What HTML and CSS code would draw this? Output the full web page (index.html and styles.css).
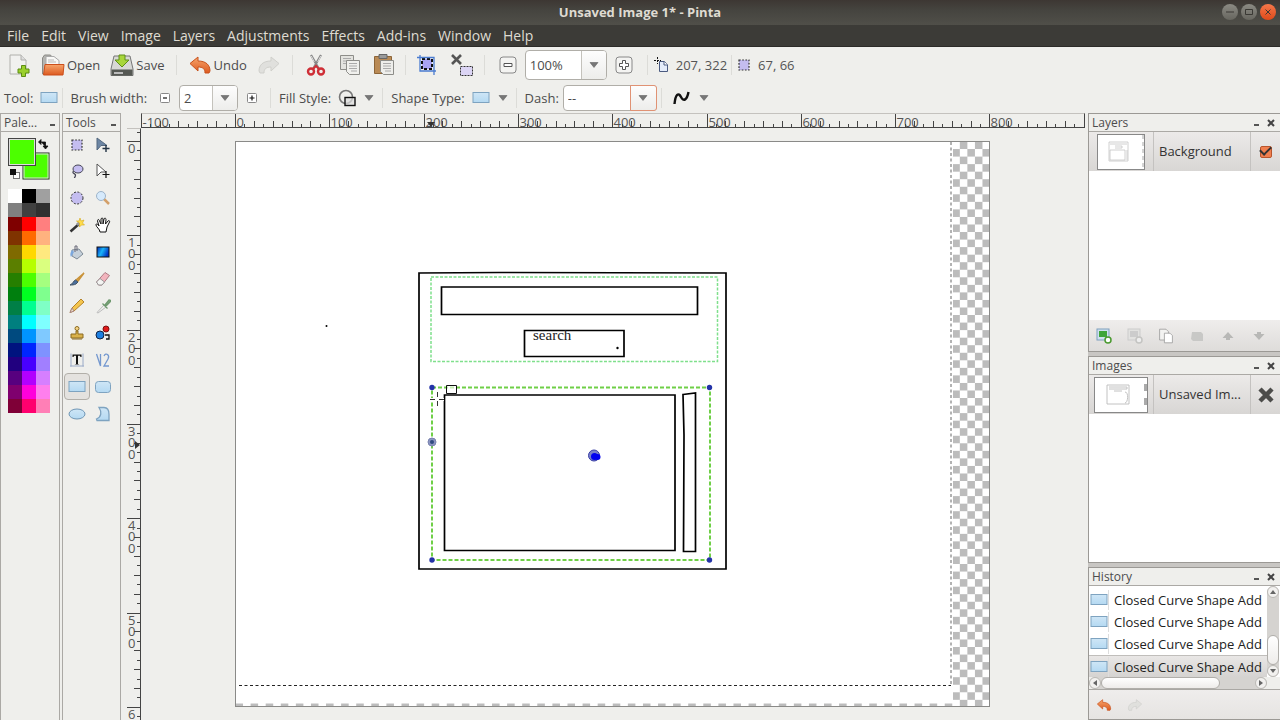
FILE: index.html
```html
<!DOCTYPE html>
<html lang="en">
<head>
<meta charset="utf-8">
<title>Unsaved Image 1* - Pinta</title>
<link rel="stylesheet" href="styles.css">
</head>
<body>
<svg class="defs" aria-hidden="true">
  <defs>
    <linearGradient id="g-blue" x1="0" y1="0" x2="0" y2="1"><stop offset="0" stop-color="#cfe6f6"/><stop offset="1" stop-color="#b4d9f2"/></linearGradient>
    <linearGradient id="g-orange" x1="0" y1="0" x2="0" y2="1"><stop offset="0" stop-color="#f7a56c"/><stop offset="1" stop-color="#dc5a20"/></linearGradient>
    <linearGradient id="g-grad" x1="0" y1="0" x2="1" y2=".4"><stop offset="0" stop-color="#0026b8"/><stop offset=".5" stop-color="#19b4f8"/><stop offset="1" stop-color="#0038c8"/></linearGradient>
    <symbol id="i-rect" viewBox="0 0 18 14"><rect x="1" y="1.500" width="16" height="10" fill="url(#g-blue)" stroke="#7ea3c0"/></symbol>
    <symbol id="i-arrow" viewBox="0 0 10 6"><path d="M1 .5h8L5 5.500z" fill="#777" stroke="#555" stroke-width=".5"/></symbol>
    <symbol id="i-undo" viewBox="0 0 24 24"><path d="M2 10.500 10 4v4c8 0 12 4 12 10l-1 2h-4c0-4-2-6-7-6v4z" fill="url(#g-orange)" stroke="#c8521c"/></symbol>
    <symbol id="i-redo" viewBox="0 0 24 24"><path d="M22 10.500 14 4v4C6 8 2 12 2 18l1 2h4c0-4 2-6 7-6v4z" fill="#e0e0dd" stroke="#cfcfcb"/></symbol>
    <symbol id="i-sel" viewBox="0 0 16 16"><rect x="3" y="3" width="10" height="10" fill="#c4bdf0" stroke="#333" stroke-width="1.200" stroke-dasharray="1.700 1.500"/></symbol>
    <symbol id="i-pages" viewBox="0 0 20 20"><path d="M2 1.500h8l3 3V15H2z" fill="#f3f3f1" stroke="#999"/><path d="M8 6.500h7l3 3v9H8z" fill="#fff" stroke="#999"/></symbol>
  </defs>
</svg>

<header class="titlebar">
  <h1 class="title">Unsaved Image 1* - Pinta</h1>
  <div class="window-buttons">
    <button class="wbtn" aria-label="Minimize"><svg viewBox="0 0 16 16"><path d="M4 8h8" /></svg></button>
    <button class="wbtn" aria-label="Maximize"><svg viewBox="0 0 16 16"><path d="M4.500 5.500h7v5h-7z"/></svg></button>
    <button class="wbtn wclose" aria-label="Close"><svg viewBox="0 0 16 16"><path d="M5.500 5.500l5 5M10.500 5.500l-5 5"/></svg></button>
  </div>
</header>

<nav class="menubar">
  <button>File</button><button>Edit</button><button>View</button><button>Image</button><button>Layers</button><button>Adjustments</button><button>Effects</button><button>Add-ins</button><button>Window</button><button>Help</button>
</nav>

<div class="toolbar main-tools">
  <button class="tb" aria-label="New"><svg class="i24" viewBox="0 0 24 24"><path d="M3 2h11l5 5v14H3z" fill="#f1f1ef" stroke="#b0b0ac"/><path d="M14 2v5h5" fill="#ddd" stroke="#b0b0ac"/><path d="M14.500 12.500h4v3.500H22v4h-3.500v3.500h-4V20H11v-4h3.500z" fill="#9bd02c" stroke="#5c8d14"/></svg></button>
  <button class="tb"><svg class="i24" viewBox="0 0 24 24"><path d="M1.500 5l2-3h6l2 3v16h-10z" fill="#b5b5b1" stroke="#8a8a86"/><path d="M5 3.500h8l5 4v7H5z" fill="#f8f8f6" stroke="#aaa"/><path d="M7 7h6M7 9h8" stroke="#bbb"/><path d="M4 11.500h19l-1 10.500H2.500z" fill="url(#g-orange)" stroke="#cc4f1b"/></svg>Open</button>
  <button class="tb"><svg class="i24" viewBox="0 0 24 24"><path d="M4 3h16l3 13v6.500H1V16z" fill="#d8d8d5" stroke="#777"/><path d="M1.500 16.500h21v6h-21z" fill="#555853"/><path d="M4 20h9" stroke="#bbb" stroke-width="2"/><path d="M9 2h6v5h4l-7 7-7-7h4z" fill="#a8d63a" stroke="#5f8f18"/></svg>Save</button>
  <i class="sep"></i>
  <button class="tb"><svg class="i24"><use href="#i-undo"/></svg>Undo</button>
  <button class="tb" aria-label="Redo" disabled><svg class="i24"><use href="#i-redo"/></svg></button>
  <i class="sep"></i>
  <button class="tb" aria-label="Cut"><svg class="i24" viewBox="0 0 24 24"><path d="M7 2l8 14M17 2L9 16" stroke="#888" stroke-width="2.200" fill="none"/><path d="M7.300 3l3 6M16.700 3l-3 6" stroke="#ddd"/><circle cx="7" cy="18.500" r="3" fill="none" stroke="#cf2f37" stroke-width="2.400"/><circle cx="17" cy="18.500" r="3" fill="none" stroke="#cf2f37" stroke-width="2.400"/><path d="M9 16l3-3 3 3" fill="none" stroke="#cf2f37" stroke-width="2"/></svg></button>
  <button class="tb" aria-label="Copy"><svg class="i24" viewBox="0 0 24 24"><path d="M2.500 2.500h13v14h-13z" fill="#e3e3df" stroke="#8d8d89"/><path d="M5 5.500h8M5 8h6M5 10.500h3" stroke="#aaa"/><path d="M8.500 7.500h13v14h-10l-3-3z" fill="#f0f0ed" stroke="#8d8d89"/><path d="M11 10.500h8M11 13h8M11 15.500h8M13 18h6" stroke="#aaa"/></svg></button>
  <button class="tb" aria-label="Paste"><svg class="i24" viewBox="0 0 24 24"><path d="M2.500 3.500h17v17h-17z" fill="#b98a55" stroke="#8d6538"/><path d="M7 1.500h8v4H7z" fill="#999" stroke="#666"/><path d="M8.500 7.500h13v14h-10l-3-3z" fill="#eeeeeb" stroke="#8d8d89"/><path d="M11 10.500h8M11 13h8M11 15.500h8M13 18h6" stroke="#aaa"/></svg></button>
  <i class="sep tight"></i>
  <button class="tb" aria-label="Crop to Selection"><svg class="i24" viewBox="0 0 24 24"><rect x="7" y="6" width="10" height="10" fill="#a9a3f2" stroke="#111" stroke-width="2" stroke-dasharray="3 2"/><path d="M5 2v16h16M2 4.500h17V22" fill="none" stroke="#4a7bd0" stroke-width="1.300"/></svg></button>
  <button class="tb" aria-label="Deselect"><svg class="i24" viewBox="0 0 24 24"><path d="M3 2l9 9M12 2l-9 9" stroke="#555" stroke-width="2.600"/><rect x="11.500" y="13.500" width="12" height="9" fill="#dcd5f5" stroke="#333" stroke-dasharray="2 1"/></svg></button>
  <i class="sep"></i>
  <button class="tb" aria-label="Zoom out"><svg class="i24" viewBox="0 0 24 24"><rect x="4" y="4" width="16" height="16" rx="3" fill="#f4f4f2" stroke="#888"/><path d="M8 10.500h8v3H8z" fill="#fff" stroke="#555"/></svg></button>
  <div class="combo zoom"><input type="text" value="100%" aria-label="Zoom"><button aria-label="Zoom levels"><svg class="arr"><use href="#i-arrow"/></svg></button></div>
  <button class="tb" aria-label="Zoom in"><svg class="i24" viewBox="0 0 24 24"><rect x="4" y="4" width="16" height="16" rx="3" fill="#f4f4f2" stroke="#888"/><path d="M10.500 7.500h3v3h3v3h-3v3h-3v-3h-3v-3h3z" fill="#fff" stroke="#555"/></svg></button>
  <i class="sep"></i>
  <span class="status"><svg class="i16" viewBox="0 0 16 16"><path d="M5.500 4.500h5l3 3v7h-8z" fill="#e4ecfa" stroke="#4a5a80"/><path d="M10 4.500v3.500h4" fill="#fff" stroke="#4a5a80"/><path d="M3.500 0v7M0 3.500h7" stroke="#111" stroke-dasharray="2 1"/></svg>207, 322</span>
  <i class="sep tight"></i>
  <span class="status"><svg class="i16"><use href="#i-sel"/></svg>67, 66</span>
</div>

<div class="toolbar options">
  <span class="lbl tool-lbl">Tool:</span><svg class="irect"><use href="#i-rect"/></svg>
  <i class="sep tight"></i>
  <label class="lbl brush-lbl" for="brush">Brush width:</label>
  <button class="step" aria-label="Thinner"><svg viewBox="0 0 10 10"><rect x=".5" y=".5" width="9" height="9" rx="1" fill="#fff" stroke="#888"/><path d="M3 5h4" stroke="#111" stroke-width="1.200"/></svg></button>
  <div class="combo brush"><input id="brush" type="text" value="2"><button aria-label="Brush widths"><svg class="arr"><use href="#i-arrow"/></svg></button></div>
  <button class="step" aria-label="Thicker"><svg viewBox="0 0 10 10"><rect x=".5" y=".5" width="9" height="9" rx="1" fill="#fff" stroke="#888"/><path d="M2.500 5h5M5 2.500v5" stroke="#111" stroke-width="1.200"/></svg></button>
  <i class="sep wide-left"></i>
  <span class="lbl">Fill Style:</span>
  <button class="drop" aria-label="Fill Style"><svg class="i18" viewBox="0 0 18 18"><circle cx="8" cy="8" r="6.500" fill="none" stroke="#777" stroke-width="1.600"/><rect x="7" y="8.500" width="10" height="8" fill="#ddd" fill-opacity=".7" stroke="#111" stroke-width="1.400"/></svg><svg class="arr"><use href="#i-arrow"/></svg></button>
  <i class="sep"></i>
  <span class="lbl">Shape Type:</span>
  <button class="drop" aria-label="Shape Type"><svg class="irect"><use href="#i-rect"/></svg><svg class="arr"><use href="#i-arrow"/></svg></button>
  <i class="sep"></i>
  <label class="lbl" for="dash">Dash:</label>
  <div class="combo dash"><input id="dash" type="text" value="--"><button class="hot" aria-label="Dash patterns"><svg class="arr"><use href="#i-arrow"/></svg></button></div>
  <i class="sep tight"></i>
  <button class="drop" aria-label="Antialiasing"><svg class="i18" viewBox="0 0 18 18"><path d="M1.500 15C2.500 5 5.500 3 8 8s6 3 7.500-5" fill="none" stroke="#111" stroke-width="2.400"/></svg><svg class="arr"><use href="#i-arrow"/></svg></button>
</div>

<main class="workspace">
  <section class="pad palette">
    <header class="pad-head"><span>Pale...</span><button class="min" aria-label="Minimize palette"></button></header>
    <svg class="swatches" viewBox="0 0 44 44" role="img" aria-label="Current colors">
      <rect x="15" y="15" width="26" height="26" fill="#4cff00" stroke="#222"/><rect x="16" y="16" width="24" height="24" fill="none" stroke="#ddd"/>
      <rect x="0.500" y="0.500" width="27" height="27" fill="#4cff00" stroke="#444"/><rect x="1.500" y="1.500" width="25" height="25" fill="none" stroke="#ddd"/>
      <path d="M33 4h4.500v5M33 1.500v5L30.500 4zM35 8h5l-2.500 3z" fill="#111" stroke="#111" stroke-width=".8"/>
      <rect x="5.500" y="34.500" width="6" height="6" fill="#fff" stroke="#777"/><rect x="2" y="31" width="6" height="6" fill="#111"/>
    </svg>
    <div class="colors" id="colors"></div>
  </section>

  <section class="pad tools">
    <header class="pad-head"><span>Tools</span><button class="min" aria-label="Minimize tools"></button></header>
    <div class="tool-grid">
      <button aria-label="Rectangle Select"><svg><use href="#i-sel"/></svg></button>
      <button aria-label="Move Selected"><svg viewBox="0 0 16 16"><path d="M2 1l10 7.500H6L2 13z" fill="#6d86a4" stroke="#52677f"/><path d="M11 8v7M7.500 11.500h7" stroke="#234" stroke-width="1.400"/></svg></button>
      <button aria-label="Lasso Select"><svg viewBox="0 0 16 16"><ellipse cx="9" cy="6" rx="5" ry="4" fill="#c4bdf0" stroke="#445"/><path d="M4.500 8c-2 3 2 2 2 4s-1 2-1 3" fill="none" stroke="#445" stroke-width="1.300"/></svg></button>
      <button aria-label="Move Selection"><svg viewBox="0 0 16 16"><path d="M2 1l9 8H6L2 13z" fill="#fff" stroke="#555"/><path d="M11 8v7M7.500 11.500h7" stroke="#111" stroke-width="1.200"/></svg></button>
      <button aria-label="Ellipse Select"><svg viewBox="0 0 16 16"><circle cx="8" cy="8" r="6" fill="#c4bdf0" stroke="#333" stroke-dasharray="2 1.500"/></svg></button>
      <button aria-label="Zoom"><svg viewBox="0 0 16 16"><path d="M9 9l5 5" stroke="#d3a06a" stroke-width="2.500"/><circle cx="6" cy="6" r="4.500" fill="#d6eafc" stroke="#9db4ca"/></svg></button>
      <button aria-label="Magic Wand"><svg viewBox="0 0 16 16"><path d="M1.500 14.500L10 7" stroke="#333" stroke-width="2.400"/><path d="M8 8l3-3" stroke="#999" stroke-width="3"/><path d="M11 1l1 3 3-1-1.500 3 2 2h-3l-2 2V6L7.500 4 10 4z" fill="#ffdc4a" stroke="#d4aa1b" stroke-width=".6"/></svg></button>
      <button aria-label="Pan"><svg viewBox="0 0 16 16"><path d="M5 15c0-3-4-5-4-7s2-1 3 1L2.500 4c0-2 1.500-2 2 0L6 7V2c.5-1.500 2-1 2 0v5l1-5c.5-1.500 2-1 2 .5L10.500 7 13 4c1-1 2 0 1.500 1L12 10l-1 5z" fill="#fff" stroke="#111"/></svg></button>
      <button aria-label="Paint Bucket"><svg viewBox="0 0 16 16"><path d="M3 6l7-1 4 5-6 5-5-3z" fill="#c5d0da" stroke="#7e8a96"/><path d="M3 6c-2 3-2 5-1 7l3-5z" fill="#7aa7de"/><path d="M6 8V2h2v5" fill="none" stroke="#667"/></svg></button>
      <button aria-label="Gradient"><svg viewBox="0 0 16 16"><rect x="2" y="3" width="12" height="10" fill="url(#g-grad)" stroke="#111"/></svg></button>
      <button aria-label="Paintbrush"><svg viewBox="0 0 16 16"><path d="M15 2l-8 7 2 1z" fill="#e8b45a" stroke="#c9933a" stroke-width="1.500"/><path d="M6.500 9l2.500 2-2 2c-2 1-4 1-6 1 3-1 3-4 5.500-5z" fill="#4a6f9e" stroke="#456"/></svg></button>
      <button aria-label="Eraser"><svg viewBox="0 0 16 16"><path d="M10 1.500l4.500 3L7 14H3.500L1.500 11z" fill="#f2b4bd" stroke="#ad7d85"/><path d="M5 7.500l4.500 3.500L7 14H3.500L1.500 11z" fill="#f4f4f2" stroke="#999"/></svg></button>
      <button aria-label="Pencil"><svg viewBox="0 0 16 16"><path d="M12 1l3 3L5 13l-4 1.500L3 10z" fill="#f4c54e" stroke="#b5832a"/><path d="M3 10l2 3-4 1.500z" fill="#eee0c8" stroke="#a88"/></svg></button>
      <button aria-label="Color Picker"><svg viewBox="0 0 16 16"><path d="M9 7L2 14.500l1 .5 8-6z" fill="#f2f2f0" stroke="#bbb"/><path d="M7.500 5.500l5 5M10 7l4-5c2 0 2 1 1 2l-4 4z" fill="#7fa97f" stroke="#6f996f" stroke-width="1.300"/></svg></button>
      <button aria-label="Clone Stamp"><svg viewBox="0 0 16 16"><circle cx="8" cy="3.500" r="2" fill="#f6d586" stroke="#8b6a22"/><path d="M7 6h2v3h5v4H2V9h5z" fill="#d9b14b" stroke="#8b6a22"/><path d="M3 14h10" stroke="#8b6a22"/></svg></button>
      <button aria-label="Recolor"><svg viewBox="0 0 16 16"><circle cx="5" cy="10" r="4" fill="#1d7fe0" stroke="#124"/><circle cx="11" cy="4" r="3" fill="#e01a1a" stroke="#711"/><path d="M10 10h4v4h-3" fill="none" stroke="#111" stroke-width="1.300"/></svg></button>
      <button aria-label="Text"><svg viewBox="0 0 16 16"><path d="M2 1.500v13M14 1.500v13M1 14h14" stroke="#9aaac8"/><path d="M3.500 2.500h9v2.500h-1l-.5-1.200H9V12l1.500.5H5.500L7 12V3.800H5L4.500 5h-1z" fill="#111"/></svg></button>
      <button aria-label="Line/Curve"><svg viewBox="0 0 16 16"><path d="M1.500 2l4 12V2M9 4c2-4 6-1 4 3l-4 7h5" fill="none" stroke="#7498cf" stroke-width="1.300"/></svg></button>
      <button class="active" aria-label="Rectangle" aria-pressed="true"><svg class="big"><use href="#i-rect"/></svg></button>
      <button aria-label="Rounded Rectangle"><svg viewBox="0 0 16 16"><rect x=".5" y="2.500" width="15" height="11" rx="3" fill="url(#g-blue)" stroke="#7ea3c0"/></svg></button>
      <button aria-label="Ellipse"><svg class="big" viewBox="0 0 18 14"><ellipse cx="9" cy="7" rx="8" ry="5" fill="url(#g-blue)" stroke="#6f96b5"/></svg></button>
      <button aria-label="Freeform Shape"><svg viewBox="0 0 16 16"><path d="M4 1.500h5c4 0 5 3 5 7v6H2l-.5-1.500C6.500 11 7 6 4 1.500z" fill="url(#g-blue)" stroke="#7ea3c0" stroke-width="1.300"/></svg></button>
    </div>
  </section>

  <section class="document">
    <svg class="hruler" id="hruler" role="img" aria-label="Horizontal ruler"></svg>
    <svg class="vruler" id="vruler" role="img" aria-label="Vertical ruler"></svg>
    <div class="viewport">
      <svg class="canvas" width="755" height="566" viewBox="235 141 755 566" role="img" aria-label="Image canvas">
        <defs><pattern id="checker" x="235.500" y="141.500" width="15.090" height="15.090" patternUnits="userSpaceOnUse"><rect width="16" height="16" fill="#fff"/><path d="M0 0h7.550v7.550H0zM7.550 7.550h7.550v7.550H7.550z" fill="#bcbcbc"/></pattern></defs>
        <rect x="235" y="141" width="755" height="566" fill="url(#checker)"/>
        <path d="M235 141h718v562.500H235z" fill="#fff"/>
        <path d="M951 142v543.500" stroke="#666" stroke-dasharray="3 2.500"/><path d="M239 685.500h712" stroke="#222" stroke-dasharray="3 2.500"/>
        <g fill="none" stroke="#000" stroke-width="1.700">
          <path d="M419 273l80-.5 227 .5v296H419z"/>
          <path d="M441.500 287h256v27.500h-256zM524.500 330.500h99.500v26h-99.500z"/>
          <path d="M444.500 395H675v155.500H444.500zM683 394.500l12.500-1.500v158.500H683.500L684 435z"/>
        </g>
        <path d="M431 277h286.500v84.500H431z" fill="none" stroke="#7fe08c" stroke-width="1.500" stroke-dasharray="3 1.500"/>
        <path d="M432 387.500h278V560H432z" fill="none" stroke="#6fcf47" stroke-width="2" stroke-dasharray="4 2"/>
        <text class="drawn" x="533" y="340">search</text>
        <circle cx="617.500" cy="348" r="1.200"/><circle cx="326.500" cy="326" r="1"/>
        <path d="M446.500 385.500h10v8h-10z" fill="#fff" fill-opacity=".6" stroke="#111"/>
        <path d="M438 392v14M430 399.500h14" stroke="#fff" stroke-width="3"/>
        <path d="M437.500 392v5M437.500 401v5M430 399.500h5M439 399.500h5" stroke="#333"/>
        <g fill="#2433a8"><circle cx="432" cy="387.500" r="2.700"/><circle cx="709.500" cy="387.500" r="2.700"/><circle cx="432" cy="560" r="2.700"/><circle cx="709.500" cy="560" r="2.700"/></g>
        <circle cx="432" cy="442" r="4" fill="#8b95c0" stroke="#7a83b0"/><circle cx="432" cy="442" r="2" fill="#304a80"/>
        <circle cx="594" cy="455.500" r="5.500" fill="#7880c8" stroke="#3a3fa8"/><circle cx="594.500" cy="456.500" r="3.500" fill="#0000ee"/><circle cx="597.500" cy="457" r="3" fill="#0000ee"/>
        <rect x="235.500" y="141.500" width="754" height="565" fill="none" stroke="#8a8a88"/>
      </svg>
    </div>
  </section>

  <aside class="dock">
    <section class="panel">
      <header class="pad-head"><span>Layers</span><button class="min" aria-label="Minimize layers"></button><button class="x" aria-label="Close layers"><svg viewBox="0 0 8 8"><path d="M1 1l6 6M7 1l-6 6"/></svg></button></header>
      <div class="row item">
        <span class="thumb-cell"><svg class="thumb" viewBox="0 0 48 36"><rect x=".5" y=".5" width="47" height="35" fill="#fff" stroke="#888"/><path d="M46 1v34" stroke="#aaa" stroke-dasharray="4 3"/><path d="M12 8h19v19H12zM13 10h17M18 12h7v2h-7M13 16h15v10H13zM30 16v10" fill="none" stroke="#c4c4c4" stroke-width=".8"/></svg></span>
        <label class="name" for="vis">Background</label>
        <span class="end-cell"><input id="vis" class="check" type="checkbox" checked></span>
      </div>
      <div class="blank"></div>
      <div class="panel-tools">
        <button aria-label="Add New Layer"><svg viewBox="0 0 16 16"><rect x="1" y="1" width="12" height="11" fill="#cfe0ef" stroke="#7f9fbe"/><rect x="3" y="3" width="8" height="6" fill="#3fa53a"/><circle cx="12" cy="12" r="3" fill="#fff" stroke="#4a9a30" stroke-width="1.500"/></svg></button>
        <button aria-label="Delete Layer" disabled><svg viewBox="0 0 16 16"><rect x="1" y="1" width="12" height="11" fill="#e2e2e0" stroke="#ccc"/><rect x="3" y="3" width="8" height="6" fill="#ccc"/><circle cx="12" cy="12" r="3" fill="#eee" stroke="#c4c4c2" stroke-width="1.500"/></svg></button>
        <button aria-label="Duplicate Layer"><svg><use href="#i-pages"/></svg></button>
        <button aria-label="Merge Layer Down" disabled><svg viewBox="0 0 16 16"><path d="M3 4h9l2 2v7H4l-2-2z" fill="#c8c8c6"/></svg></button>
        <button aria-label="Move Layer Up" disabled><svg viewBox="0 0 16 16"><path d="M8 4l5.500 6H10v2H6v-2H2.500z" fill="#b8b8b6"/></svg></button>
        <button aria-label="Move Layer Down" disabled><svg viewBox="0 0 16 16"><path d="M8 12L2.500 6H6V4h4v2h3.500z" fill="#b8b8b6"/></svg></button>
      </div>
    </section>

    <section class="panel">
      <header class="pad-head"><span>Images</span><button class="min" aria-label="Minimize images"></button><button class="x" aria-label="Close images"><svg viewBox="0 0 8 8"><path d="M1 1l6 6M7 1l-6 6"/></svg></button></header>
      <div class="row item">
        <span class="thumb-cell"><svg class="thumb wide" viewBox="0 0 54 36"><rect x=".5" y=".5" width="53" height="35" fill="#fff" stroke="#888"/><path d="M51.500 7v7M51.500 21v7" stroke="#aaa" stroke-width="3"/><path d="M13 8h22v19H13zM15 10h18v2H15M20 14h8M31 15c4 0 3 11 0 11" fill="none" stroke="#bbb" stroke-width=".9"/></svg></span>
        <span class="name">Unsaved Im...</span>
        <button class="end-cell" aria-label="Close image"><svg class="i16" viewBox="0 0 16 16"><path d="M2 2l12 12M14 2L2 14" stroke="#4c4c4a" stroke-width="4.500"/></svg></button>
      </div>
      <div class="blank"></div>
    </section>

    <section class="panel">
      <header class="pad-head"><span>History</span><button class="min" aria-label="Minimize history"></button><button class="x" aria-label="Close history"><svg viewBox="0 0 8 8"><path d="M1 1l6 6M7 1l-6 6"/></svg></button></header>
      <div class="history">
        <ul class="hist-list">
          <li><svg class="irect"><use href="#i-rect"/></svg><span>Closed Curve Shape Add</span></li>
          <li><svg class="irect"><use href="#i-rect"/></svg><span>Closed Curve Shape Add</span></li>
          <li><svg class="irect"><use href="#i-rect"/></svg><span>Closed Curve Shape Add</span></li>
          <li class="current"><svg class="irect"><use href="#i-rect"/></svg><span>Closed Curve Shape Add</span></li>
        </ul>
        <div class="vscroll">
          <button class="cap" aria-label="Scroll up"><svg viewBox="0 0 6 6"><path d="M0 5l3-4 3 4z"/></svg></button>
          <i class="track"></i><i class="knob"></i>
          <button class="cap" aria-label="Scroll down"><svg viewBox="0 0 6 6"><path d="M0 1l3 4 3-4z"/></svg></button>
        </div>
      </div>
      <div class="hscroll">
        <button class="cap" aria-label="Scroll left"><svg viewBox="0 0 6 6"><path d="M5 0L1 3l4 3z"/></svg></button>
        <i class="knob"></i><i class="track"></i>
        <button class="cap" aria-label="Scroll right"><svg viewBox="0 0 6 6"><path d="M1 0l4 3-4 3z"/></svg></button>
      </div>
      <div class="panel-tools hist-tools">
        <button aria-label="Undo"><svg><use href="#i-undo"/></svg></button>
        <button aria-label="Redo" disabled><svg><use href="#i-redo"/></svg></button>
      </div>
    </section>
  </aside>
</main>
<script src="app.js"></script>
</body>
</html>
```
FILE: styles.css
```css
* { box-sizing: border-box; }
html, body { height: 100%; }
body {
  margin: 0;
  display: flex;
  flex-direction: column;
  overflow: hidden;
  background: #efefec;
  color: #4c4c4c;
  font: 14px/20px "Open Sans", "Noto Sans", sans-serif;
}
button, input { font: inherit; color: inherit; margin: 0; padding: 0; border: 0; background: none; }
button { display: flex; align-items: center; justify-content: center; }
svg { display: block; flex: none; }
i { font-style: normal; }
.defs { position: absolute; width: 0; height: 0; }

.titlebar {
  flex: none;
  height: 25px;
  display: grid;
  grid-template-columns: 1fr auto 1fr;
  align-items: center;
  background: linear-gradient(#3d3733, #45443f 40%, #504f49);
}
.title { grid-column: 2; margin: 0; font-size: 13px; line-height: 22px; padding-bottom: 2px; font-weight: 700; color: #dfdbd2; }
.window-buttons { display: flex; gap: 3px; justify-content: flex-end; padding: 0 4px 1px 0; }
.wbtn { width: 16px; height: 16px; border-radius: 50%; background: linear-gradient(#8b8a83, #67665f); }
.wbtn svg { width: 16px; height: 16px; fill: none; stroke: #3a3934; }
.wclose { background: linear-gradient(#f5774a, #df4a1a); }

.menubar {
  flex: none;
  height: 22px;
  display: flex;
  padding-left: 1px;
  background: #3c3b37;
  border-bottom: 1px solid #2c2b28;
}
.menubar button { padding: 0 6px; color: #dfdbd2; }

.toolbar { flex: none; display: flex; align-items: center; font-size: 13px; }
.main-tools { height: 36px; padding-left: 2px; }
.options { height: 30px; padding-left: 4px; }
.tb { height: 30px; padding: 0 5px; gap: 2px; white-space: nowrap; }
.i24 { width: 24px; height: 24px; }
.i18 { width: 18px; height: 18px; }
.i16 { width: 16px; height: 16px; }
.irect { width: 18px; height: 14px; }
.arr { width: 10px; height: 6px; }
.sep { flex: none; width: 1px; height: 20px; background: #dcdcd8; }
.main-tools .sep { margin: 0 6px; }
.options .sep { margin: 0 8px; }
.toolbar .tight { margin: 0 4px; }
.options .wide-left { margin-left: 13px; }
.lbl { white-space: nowrap; }
.tool-lbl { margin-right: 6px; }
.brush-lbl { margin: 0 13px 0 4px; }
.status { display: flex; align-items: center; gap: 6px; color: #555; }
.combo {
  display: flex;
  border: 1px solid #b0aea8;
  border-radius: 4px;
  background: #fff;
}
.combo input { min-width: 0; flex: 1; padding-left: 4px; outline: 0; }
.combo button { width: 25px; border-left: 1px solid #c4c2bc; border-radius: 0 3px 3px 0; background: linear-gradient(#fdfdfd, #ededeb); }
.combo .hot { border: 1px solid #e09274; margin: -1px; width: 27px; }
.zoom { width: 82px; height: 30px; }
.brush { width: 59px; height: 26px; margin: 0 9px; }
.dash { width: 94px; height: 26px; margin-left: 4px; }
.step svg { width: 10px; height: 10px; }
.drop { gap: 8px; margin-left: 7px; }

.workspace { flex: 1; min-height: 0; display: grid; grid-template-columns: 60px 61px 1fr 192px; }
.workspace > .tools { margin-left: 2px; }
.pad { border: 1px solid #aba9a5; border-bottom: 0; }
.pad-head {
  flex: none;
  height: 18px;
  display: flex;
  align-items: center;
  gap: 7px;
  padding: 0 4px 0 3px;
  border-bottom: 1px solid #aba9a5;
  font-size: 12px;
  line-height: 16px;
}
.pad-head span { flex: 1; white-space: nowrap; }
.min { width: 5px; height: 2px; margin-top: 5px; background: #555; }
.x svg { width: 8px; height: 8px; stroke: #444; stroke-width: 2; }

.swatches { width: 44px; height: 44px; margin: 6px 0 0 7px; }
.colors { display: grid; grid-template-columns: repeat(3, 14px); grid-auto-rows: 14px; margin: 7px 0 0 7px; }

.tool-grid { display: grid; grid-template-columns: 26px 26px; grid-template-rows: 25px; grid-auto-rows: 27px; margin-left: 1px; }
.tool-grid svg { width: 16px; height: 16px; }
.tool-grid .big { width: 18px; height: 14px; }
.tool-grid .active { border: 1px solid #b2afa9; border-radius: 4px; background: #e4e2df; }

.document {
  min-width: 0;
  min-height: 0;
  display: grid;
  grid-template: 15px 1fr / 14px 1fr;
  padding-right: 3px;
  margin-left: 6px;
}
.hruler { grid-column: 2; width: 100%; height: 15px; border: 1px solid #444; border-top-color: #c4c2be; }
.vruler { grid-row: 2; width: 14px; height: 100%; border-top: 1px solid #c4c2be; border-right: 1px solid #444; }
.ruler-text { font-size: 13px; fill: #555; }
.viewport { grid-row: 2; grid-column: 2; overflow: hidden; display: grid; place-content: center; padding-right: 1px; }
.drawn { font: 15px "Liberation Serif", serif; fill: #222; }

.dock { min-height: 0; display: grid; grid-template-rows: 239fr 207fr 153fr; gap: 4px; background: #c8c6c3; }
.panel { min-height: 0; min-width: 0; display: flex; flex-direction: column; border: 1px solid #9b9995; border-right: 0; background: #efefec; overflow: hidden; }
.dock .pad-head { padding-right: 5px; gap: 8px; }
.row { flex: none; height: 39px; display: flex; background: linear-gradient(#eceae9, #d8d6d4); color: #333; }
.thumb-cell { width: 65px; display: grid; place-content: center; border-right: 1px solid #c4c2c0; }
.thumb { width: 48px; height: 36px; }
.wide { width: 54px; }
.name { flex: 1; padding-left: 5px; line-height: 39px; font-size: 13px; white-space: nowrap; }
.end-cell { width: 30px; display: grid; place-content: center; border-left: 1px solid #c4c2c0; }
.check { appearance: none; width: 12px; height: 12px; border: 1px solid #b8552d; border-radius: 2px; background: #f07f4f; display: grid; place-content: center; }
.check::before { content: ""; width: 9px; height: 5px; margin-bottom: 4px; border: solid #333; border-width: 0 0 2px 2px; transform: rotate(-45deg); }
.blank { flex: 1; background: #fff; }
.panel-tools { flex: none; height: 31px; display: flex; align-items: center; gap: 15px; padding-left: 7px; background: linear-gradient(#efedec, #dedcda); }
.panel-tools svg { width: 16px; height: 16px; }
.hist-tools { height: 30px; border-top: 1px solid #aaa8a4; background: linear-gradient(#efedec, #e6e4e2); }

.history { flex: 1; min-height: 0; display: flex; background: #fff; }
.hist-list { flex: 1; min-width: 0; margin: 0; padding: 0; list-style: none; display: flex; flex-direction: column; justify-content: flex-end; overflow: hidden; }
.hist-list li { flex: none; height: 22px; display: flex; align-items: center; padding-left: 1px; white-space: nowrap; color: #222; }
.hist-list span { padding-left: 5px; font-size: 13px; line-height: 20px; border-left: 1px solid #ddd; }
.hist-list .current { background: linear-gradient(#e9e7e6, #d5d3d1); border-top: 1px solid #c0bebb; }
.vscroll { width: 12px; margin-right: 1px; display: flex; flex-direction: column; border-radius: 6px; background: #d5d3d0; }
.hscroll { flex: none; height: 12px; display: flex; margin-right: 13px; border-radius: 6px; background: #d5d3d0; }
.cap { flex: none; width: 12px; height: 12px; border: 1px solid #bbb9b5; border-radius: 6px; background: #f2f1ef; }
.cap svg { width: 6px; height: 6px; fill: #666; }
.vscroll .track { flex: 39; }
.vscroll .knob { flex: 29; }
.hscroll .track { flex: 35; }
.hscroll .knob { flex: 117; }
.knob { border: 1px solid #b0aeaa; border-radius: 6px; background: linear-gradient(#fff, #eeecea); }
```
FILE: app.js
```js
const swatches = [
  "#ffffff", "#000000", "#a0a0a0", "#808080", "#404040", "#303030",
  "#7f0000", "#ff0000", "#ff7f7f", "#7f3300", "#ff6a00", "#ffb27f",
  "#7f6a00", "#ffd800", "#ffe97f", "#5b7f00", "#b6ff00", "#daff7f",
  "#267f00", "#4cff00", "#a5ff7f", "#007f0e", "#00ff21", "#7fff8e",
  "#007f46", "#00ff90", "#7fffc5", "#007f7f", "#00ffff", "#7fffff",
  "#004a7f", "#0094ff", "#7fc9ff", "#00137f", "#0026ff", "#7f92ff",
  "#21007f", "#4800ff", "#a17fff", "#57007f", "#b200ff", "#d67fff",
  "#7f006e", "#ff00dc", "#ff7fed", "#7f0037", "#ff006e", "#ff7fb6"
];
const colors = document.getElementById("colors");
for (const c of swatches) {
  const cell = document.createElement("span");
  cell.style.background = c;
  colors.append(cell);
}

// Rulers: one tick every 10 image pixels, a label every 100.
const STEP = 9.43;
const hruler = document.getElementById("hruler");
const vruler = document.getElementById("vruler");

function drawRulers() {
  const width = hruler.clientWidth;
  const height = vruler.clientHeight;
  const originX = Math.floor((width - 755) / 2);
  const originY = Math.floor((height - 566) / 2);
  let h = "", v = "";
  for (let n = -10; n <= 400; n++) {
    const x = Math.round(originX + n * STEP) + 0.5;
    const y = Math.round(originY + n * STEP) + 0.5;
    const len = n % 10 === 0 ? 13 : n % 2 === 0 ? 6 : 3;
    const major = n % 10 === 0;
    if (x < width) {
      h += `<path d="M${x} 13v-${len}" stroke="#444"/>`;
      if (major) h += `<text class="ruler-text" x="${x + 1}" y="13">${n * 10}</text>`;
    }
    if (y > 0 && y < height) {
      v += `<path d="M13 ${y}h-${len}" stroke="#444"/>`;
      if (major) {
        [...String(n * 10)].forEach((d, i) => {
          const base = y + 11 + i * 11.5;
          if (base < height + 4) v += `<text class="ruler-text" x="1" y="${base}">${d}</text>`;
        });
      }
    }
  }
  h += `<path d="M${originX + 192} 8h8l-4 5z" fill="#333"/>`;
  v += `<path d="M8 ${originY + 300}v8l5-4z" fill="#333"/>`;
  hruler.innerHTML = h;
  vruler.innerHTML = v;
}
drawRulers();
window.addEventListener("resize", drawRulers);
```
